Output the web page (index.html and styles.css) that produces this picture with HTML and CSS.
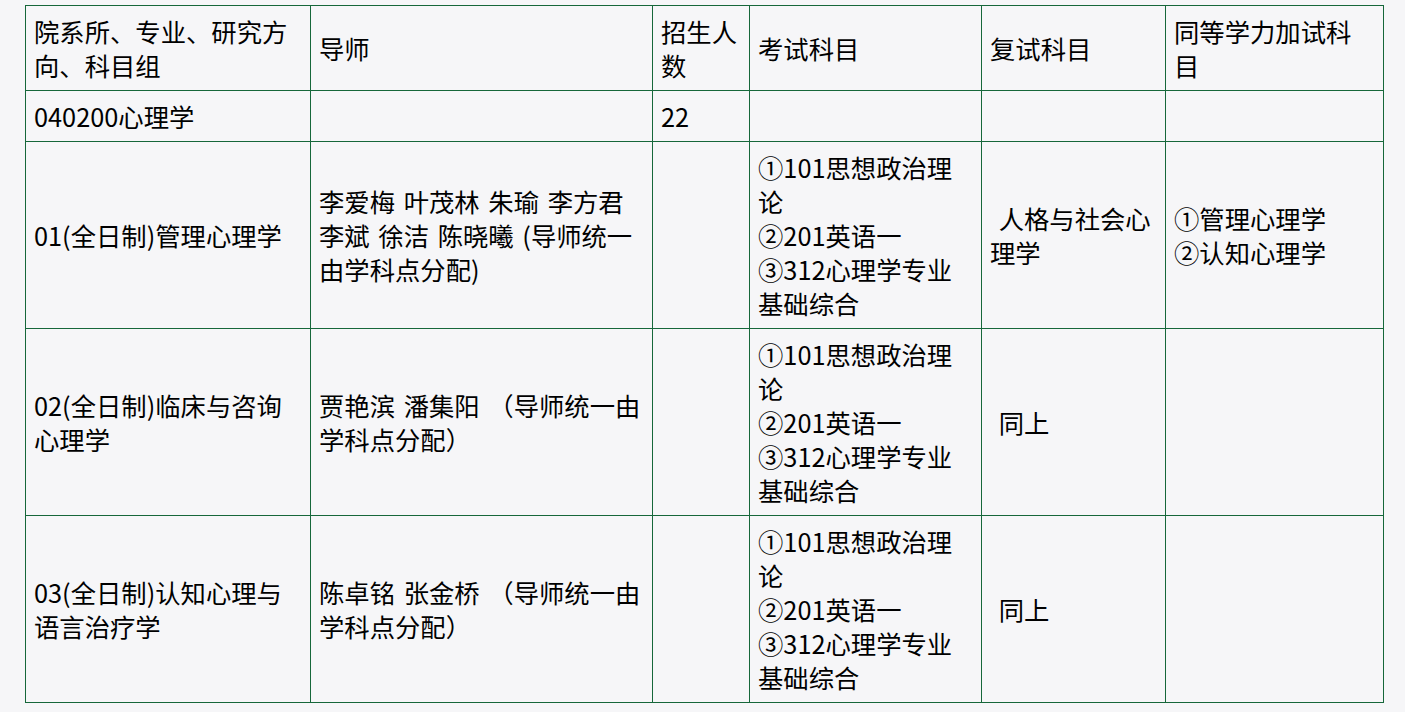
FILE: index.html
```html
<!DOCTYPE html>
<html lang="zh-CN">
<head>
<meta charset="utf-8">
<title>招生目录</title>
<link rel="stylesheet" href="styles.css">
</head>
<body>
<main class="page">
  <table class="catalog">
    <colgroup>
      <col class="c-dept">
      <col class="c-tutor">
      <col class="c-num">
      <col class="c-exam">
      <col class="c-retest">
      <col class="c-extra">
    </colgroup>
    <tr>
      <td>院系所、专业、研究方向、科目组</td>
      <td>导师</td>
      <td>招生人数</td>
      <td>考试科目</td>
      <td>复试科目</td>
      <td>同等学力加试科目</td>
    </tr>
    <tr>
      <td>040200心理学</td>
      <td></td>
      <td>22</td>
      <td></td>
      <td></td>
      <td></td>
    </tr>
    <tr>
      <td>01(全日制)管理心理学</td>
      <td>李爱梅 叶茂林 朱瑜 李方君 李斌 徐洁 陈晓曦 (导师统一由学科点分配)</td>
      <td></td>
      <td>①101思想政治理论<br>②201英语一<br>③312心理学专业基础综合</td>
      <td>&nbsp;人格与社会心理学</td>
      <td>①管理心理学<br>②认知心理学</td>
    </tr>
    <tr>
      <td>02(全日制)临床与咨询心理学</td>
      <td>贾艳滨 潘集阳 （导师统一由学科点分配）</td>
      <td></td>
      <td>①101思想政治理论<br>②201英语一<br>③312心理学专业基础综合</td>
      <td>&nbsp;同上</td>
      <td></td>
    </tr>
    <tr>
      <td>03(全日制)认知心理与语言治疗学</td>
      <td>陈卓铭 张金桥 （导师统一由学科点分配）</td>
      <td></td>
      <td>①101思想政治理论<br>②201英语一<br>③312心理学专业基础综合</td>
      <td>&nbsp;同上</td>
      <td></td>
    </tr>
  </table>
</main>
</body>
</html>
```

FILE: styles.css
```css
html, body {
  margin: 0;
  padding: 0;
  background: #f6f6f8;
}

.page {
  padding: 5px 0 0 25px;
}

.catalog {
  border-collapse: collapse;
  table-layout: fixed;
  width: 1358px;
  font-family: "Noto Sans CJK SC", "Noto Sans", sans-serif;
  font-size: 25.33px;
  line-height: 34px;
  word-spacing: 3px;
  color: #000;
}

.catalog td {
  border: 1px solid #16673a;
  padding: 8px 8px;
  vertical-align: middle;
  text-align: left;
}

.c-dept { width: 285px; }
.c-tutor { width: 342px; }
.c-num { width: 97px; }
.c-exam { width: 232px; }
.c-retest { width: 184px; }
.c-extra { width: 218px; }
```
